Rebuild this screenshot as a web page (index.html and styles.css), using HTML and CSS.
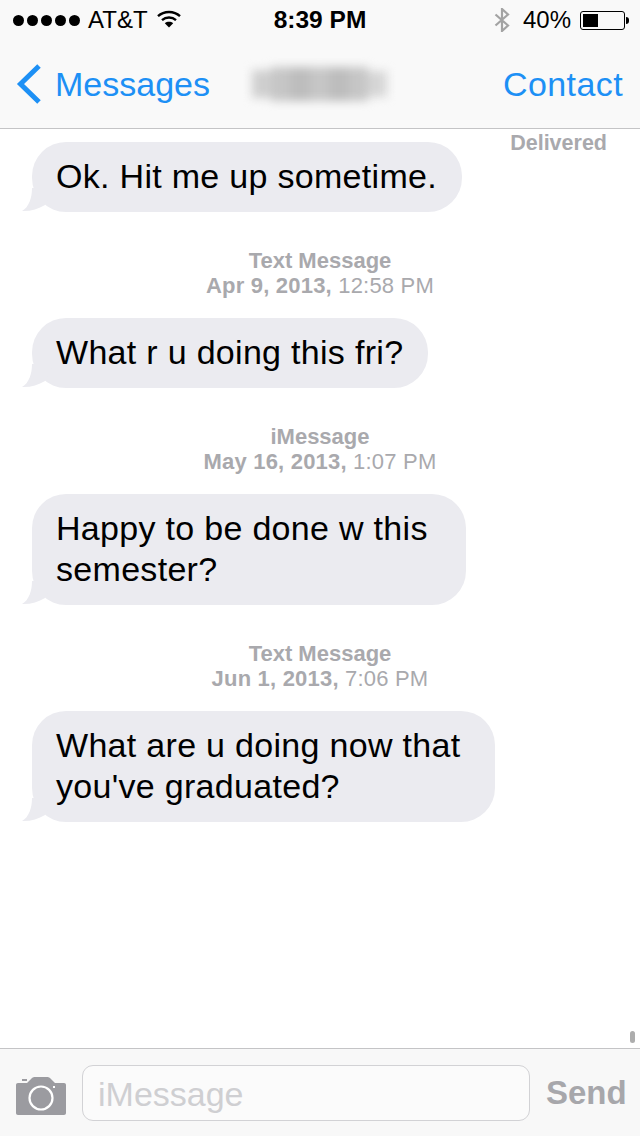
FILE: index.html
```html
<!DOCTYPE html>
<html lang="en">
<head>
    <meta charset="UTF-8">
    <meta name="viewport" content="width=device-width, initial-scale=1.0">
    <title>Messages</title>
    <link rel="stylesheet" href="styles.css">
</head>
<body>
    <div class="phone">
        <header class="top">
            <div class="status">
                <div class="status-left">
                    <span class="signal"><i></i><i></i><i></i><i></i><i></i></span>
                    <span class="carrier">AT&amp;T</span>
                    <svg class="wifi" width="24" height="18" viewBox="0 0 24 18">
                        <path d="M1 6.200C7 .6 17 .6 23 6.200" fill="none" stroke="#000" stroke-width="2.400"/>
                        <path d="M5 10.200c4-3.600 10-3.600 14 0" fill="none" stroke="#000" stroke-width="2.400"/>
                        <path d="M12 17.500 7.800 13.200c2.400-1.900 6-1.900 8.400 0z" fill="#000"/>
                    </svg>
                </div>
                <div class="clock">8:39 PM</div>
                <div class="status-right">
                    <svg class="bt" width="16" height="24" viewBox="0 0 16 24">
                        <path d="M1.500 6.500 14 17.500 8 23V1l6 5.500L1.500 17.500" fill="none" stroke="#a3a3a3" stroke-width="2.200"/>
                    </svg>
                    <span class="percent">40%</span>
                    <span class="battery"><span class="battery-fill"></span></span>
                    <span class="battery-tip"></span>
                </div>
            </div>
            <nav class="nav">
                <a class="back">
                    <svg width="25" height="40" viewBox="0 0 25 40">
                        <path d="M23 2 4.500 20 23 38" fill="none" stroke="#1d90f5" stroke-width="5"/>
                    </svg>
                    <span>Messages</span>
                </a>
                <div class="name-blur"><i></i><i></i><i></i><i></i><i></i><i></i><i></i></div>
                <a class="contact">Contact</a>
            </nav>
        </header>

        <main class="thread">
            <div class="delivered">Delivered</div>

            <div class="bubble">
                Ok. Hit me up sometime.
                <svg class="tail" width="32" height="24" viewBox="0 0 32 24"><path d="M10 0C10 10 7 19 0 23 8 23.500 16 21 23 17L32 0z" fill="#ebebf0"/></svg>
            </div>

            <div class="stamp">
                <div><b>Text Message</b></div>
                <div class="stamp-date"><b>Apr 9, 2013,</b> 12:58 PM</div>
            </div>
            <div class="bubble">
                What r u doing this fri?
                <svg class="tail" width="32" height="24" viewBox="0 0 32 24"><path d="M10 0C10 10 7 19 0 23 8 23.500 16 21 23 17L32 0z" fill="#ebebf0"/></svg>
            </div>

            <div class="stamp">
                <div><b>iMessage</b></div>
                <div class="stamp-date"><b>May 16, 2013,</b> 1:07 PM</div>
            </div>
            <div class="bubble bubble-semester">
                Happy to be done w this<br>semester?
                <svg class="tail" width="32" height="24" viewBox="0 0 32 24"><path d="M10 0C10 10 7 19 0 23 8 23.500 16 21 23 17L32 0z" fill="#ebebf0"/></svg>
            </div>

            <div class="stamp">
                <div><b>Text Message</b></div>
                <div class="stamp-date"><b>Jun 1, 2013,</b> 7:06 PM</div>
            </div>
            <div class="bubble bubble-graduated">
                What are u doing now that<br>you've graduated?
                <svg class="tail" width="32" height="24" viewBox="0 0 32 24"><path d="M10 0C10 10 7 19 0 23 8 23.500 16 21 23 17L32 0z" fill="#ebebf0"/></svg>
            </div>
            <div class="scroll-thumb"></div>
        </main>

        <footer class="compose">
            <svg class="camera" width="50" height="38" viewBox="0 0 50 38">
                <path fill="#9b9ba0" d="M2 6h9l4.500-4.500C16.500.5 17.500 0 19 0h12c1.500 0 2.500.5 3.500 1.500L39 6h9c1.200 0 2 .8 2 2v28c0 1.200-.8 2-2 2H2c-1.200 0-2-.8-2-2V8c0-1.200.8-2 2-2z"/>
                <circle cx="25" cy="21" r="11.500" fill="none" stroke="#fff" stroke-width="2.200"/>
                <rect x="6" y="2" width="5" height="2" fill="#9b9ba0"/>
                <rect x="37" y="9" width="2" height="2" fill="#fff"/>
            </svg>
            <div class="input">iMessage</div>
            <div class="send">Send</div>
        </footer>
    </div>
</body>
</html>
```

FILE: styles.css
```css
* {
    box-sizing: border-box;
}

body {
    margin: 0;
    font-family: "Liberation Sans", Arial, sans-serif;
    background-color: #fff;
}

.phone {
    width: 640px;
    height: 1136px;
    display: flex;
    flex-direction: column;
    overflow: hidden;
}

/* Top bars */
.top {
    height: 129px;
    background-color: #f9f9f9;
    border-bottom: 1px solid #c4c4c6;
    flex-shrink: 0;
}

.status {
    height: 40px;
    display: grid;
    grid-template-columns: 1fr auto 1fr;
    align-items: center;
    font-size: 24px;
    color: #000;
}

.status-left {
    display: flex;
    align-items: center;
    padding-left: 13px;
}

.signal {
    display: flex;
    gap: 3px;
}

.signal i {
    width: 11px;
    height: 11px;
    border-radius: 50%;
    background-color: #000;
}

.carrier {
    margin-left: 8px;
}

.wifi {
    margin-left: 9px;
    margin-top: -2px;
}

.clock {
    font-weight: bold;
    font-size: 24.5px;
}

.status-right {
    display: flex;
    align-items: center;
    justify-content: flex-end;
    padding-right: 11px;
}

.percent {
    margin-left: 13px;
}

.battery {
    width: 45px;
    height: 19px;
    margin-left: 9px;
    padding: 2px;
    border: 1px solid #000;
    border-radius: 3px;
    display: block;
}

.battery-fill {
    display: block;
    width: 15px;
    height: 13px;
    background-color: #000;
}

.battery-tip {
    width: 3px;
    height: 7px;
    margin-left: 1px;
    background-color: #000;
    border-radius: 0 3px 3px 0;
}

.nav {
    height: 88px;
    display: grid;
    grid-template-columns: 1fr 136px 1fr;
    align-items: center;
    padding: 0 17px 0 16px;
    font-size: 34px;
    color: #1d90f5;
}

.back {
    display: flex;
    align-items: center;
    gap: 14px;
}

.contact {
    justify-self: end;
    letter-spacing: .4px;
}

/* Contact name is blurred out in the original shot */
.name-blur {
    display: flex;
    align-items: center;
    height: 34px;
    filter: blur(5px);
}

.name-blur i {
    flex: 1;
    height: 34px;
    background-color: #bdbdbd;
}

.name-blur i:nth-child(2n) {
    background-color: #c6c6c6;
}

.name-blur i:first-child {
    height: 28px;
    background-color: #cfcfcf;
}

.name-blur i:last-child {
    height: 26px;
    background-color: #d6d6d6;
}

/* Thread */
.thread {
    flex: 1;
    position: relative;
    padding: 0 32px;
    display: flex;
    flex-direction: column;
    align-items: flex-start;
}

.delivered {
    align-self: flex-end;
    height: 13px;
    margin-right: 1px;
    font-size: 21.5px;
    line-height: 28px;
    font-weight: bold;
    color: #a9a9ad;
}

.bubble {
    position: relative;
    padding: 14px 25px 15px 24px;
    border-radius: 34px;
    background-color: #ebebf0;
    font-size: 34px;
    line-height: 41px;
    letter-spacing: .3px;
    color: #000;
}

/* Wrapped bubbles keep the slack from the line break */
.bubble-semester {
    padding-right: 38px;
}

.bubble-graduated {
    padding-right: 35px;
}

.tail {
    position: absolute;
    left: -10px;
    bottom: 0;
}

.stamp {
    align-self: center;
    margin: 36px 0 20px;
    font-size: 22px;
    line-height: 25px;
    text-align: center;
    color: #a9a9ad;
}

.stamp-date {
    letter-spacing: .2px;
}

.scroll-thumb {
    position: absolute;
    right: 5px;
    top: 902px;
    width: 5px;
    height: 12px;
    border-radius: 3px;
    background-color: #adadad;
}

/* Compose bar */
.compose {
    height: 88px;
    flex-shrink: 0;
    display: flex;
    align-items: center;
    padding-left: 16px;
    background-color: #f8f8f8;
    border-top: 1px solid #c4c4c6;
}

.camera {
    flex-shrink: 0;
    margin-top: 6px;
}

.input {
    flex-shrink: 0;
    width: 448px;
    height: 56px;
    margin-left: 16px;
    padding-left: 15px;
    border: 1px solid #d2d2d5;
    border-radius: 11px;
    background-color: #fbfbfb;
    font-size: 34px;
    line-height: 56px;
    color: #cfcfd2;
}

.send {
    margin-left: 16px;
    font-size: 33px;
    font-weight: bold;
    color: #a7a7ab;
}
```
